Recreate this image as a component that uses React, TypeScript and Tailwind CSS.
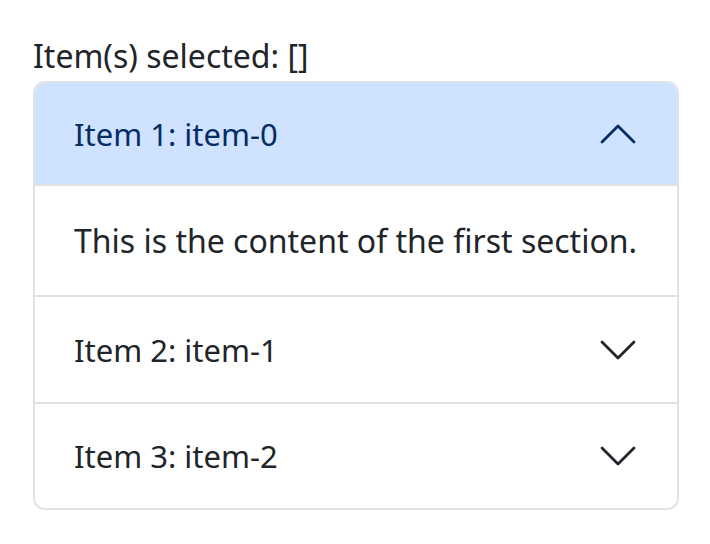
import React from 'react'

const items = [
  { title: 'Item 1: item-0', body: 'This is the content of the first section.', open: true, h: 'h-[101px]' },
  { title: 'Item 2: item-1', body: '', open: false, h: 'h-[105px]' },
  { title: 'Item 3: item-2', body: '', open: false, h: 'h-[104px]' },
]

function Chevron({ up }: { up?: boolean }) {
  return (
    <svg width="36" height="20" viewBox="0 0 36 20" fill="none" className="shrink-0">
      <path
        d={up ? 'M2 18L18 2L34 18' : 'M2 2L18 18L34 2'}
        stroke="currentColor"
        strokeWidth="2.8"
        strokeLinecap="round"
        strokeLinejoin="round"
      />
    </svg>
  )
}

export default function App() {
  return (
    <div className="w-[710px] h-[544px] bg-white pl-[33px] pt-[32px]" style={{ fontFamily: '"Noto Sans", sans-serif' }}>
      <div className="w-[646px]">
        <p className="text-[32px] leading-[48px] text-[#212529] mb-px">Item(s) selected: []</p>
        <div className="border-2 border-[#dee2e6] rounded-[12px] overflow-hidden">
          {items.map((item, i) => (
            <div key={item.title} className={i > 0 ? 'border-t-2 border-[#dee2e6]' : ''}>
              <div
                className={
                  item.h +
                  ' flex items-center justify-between pl-[39px] pr-[41px] text-[31px] leading-[48px] ' +
                  (item.open ? 'bg-[#cfe2ff] text-[#052c65]' : 'bg-white text-[#212529]')
                }
              >
                <span>{item.title}</span>
                <Chevron up={item.open} />
              </div>
              {item.open && (
                <div className="border-t-2 border-[#dee2e6] h-[111px] flex items-center pl-[39px] text-[32px] leading-[48px] text-[#212529]">
                  {item.body}
                </div>
              )}
            </div>
          ))}
        </div>
      </div>
    </div>
  )
}
